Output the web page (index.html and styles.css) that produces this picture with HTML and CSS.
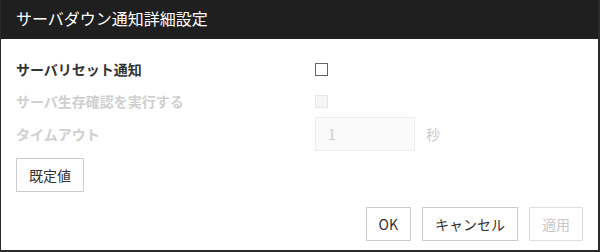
FILE: index.html
```html
<!DOCTYPE html>
<html lang="ja">
<head>
<meta charset="utf-8">
<link rel="stylesheet" href="styles.css">
</head>
<body>
<div class="dialog">
  <div class="header"><span class="title">サーバダウン通知詳細設定</span></div>
  <div class="content">
    <div class="row">
      <div class="label strong">サーバリセット通知</div>
      <div class="field"><span class="check"></span></div>
    </div>
    <div class="row">
      <div class="label muted">サーバ生存確認を実行する</div>
      <div class="field"><span class="check disabled"></span></div>
    </div>
    <div class="row tall">
      <div class="label muted">タイムアウト</div>
      <div class="field"><div class="input">1</div><span class="unit">秒</span></div>
    </div>
    <div class="default-row"><button class="btn">既定値</button></div>
  </div>
  <div class="footer">
    <button class="btn">OK</button>
    <button class="btn">キャンセル</button>
    <button class="btn disabled">適用</button>
  </div>
</div>
</body>
</html>
```
FILE: styles.css
```css
html, body {
  margin: 0;
  padding: 0;
  background: #2a2a2a;
}
body {
  width: 600px;
  height: 252px;
  overflow: hidden;
  font-family: "Noto Sans CJK JP", "Noto Sans", sans-serif;
}
.dialog {
  margin-left: 1px;
  width: 597px;
  height: 250px;
  background: #fff;
  display: flex;
  flex-direction: column;
}
.header {
  height: 39px;
  background: #1f1f1f;
  display: flex;
  align-items: center;
  padding: 0 15px 4px 15px;
  box-sizing: border-box;
}
.title {
  color: #fff;
  font-size: 16px;
}
.content {
  padding: 14px 15px 0 15px;
}
.row {
  display: flex;
  align-items: center;
  height: 32px;
}
.row.tall {
  height: 34px;
}
.label {
  width: 299px;
  font-size: 14px;
  line-height: 20px;
}
.strong {
  font-weight: bold;
  color: #333;
}
.muted {
  font-weight: bold;
  color: #cfcfcf;
}
.field {
  display: flex;
  align-items: center;
}
.check {
  display: block;
  width: 11px;
  height: 11px;
  border: 1px solid #666;
  background: #fff;
}
.check.disabled {
  border-color: #e6e6e6;
  background: #f6f6f6;
}
.input {
  width: 100px;
  height: 34px;
  box-sizing: border-box;
  border: 1px solid #ededed;
  background: #fafafa;
  color: #cccccc;
  font-size: 14px;
  line-height: 32px;
  padding-left: 12px;
}
.unit {
  margin-left: 11px;
  font-size: 14px;
  color: #cccccc;
}
.default-row {
  margin-top: 7px;
}
.btn {
  height: 34px;
  padding: 0 12px;
  border: 1px solid #cccccc;
  background: #fff;
  color: #333;
  font-family: "Noto Sans CJK JP", "Noto Sans", sans-serif;
  font-size: 14px;
  line-height: 32px;
  box-sizing: border-box;
  margin: 0;
}
.btn.disabled {
  color: #c8c8c8;
  border-color: #dedede;
}
.footer {
  margin-top: 15px;
  display: flex;
  justify-content: flex-end;
  gap: 11px;
  padding-right: 15px;
}
```
